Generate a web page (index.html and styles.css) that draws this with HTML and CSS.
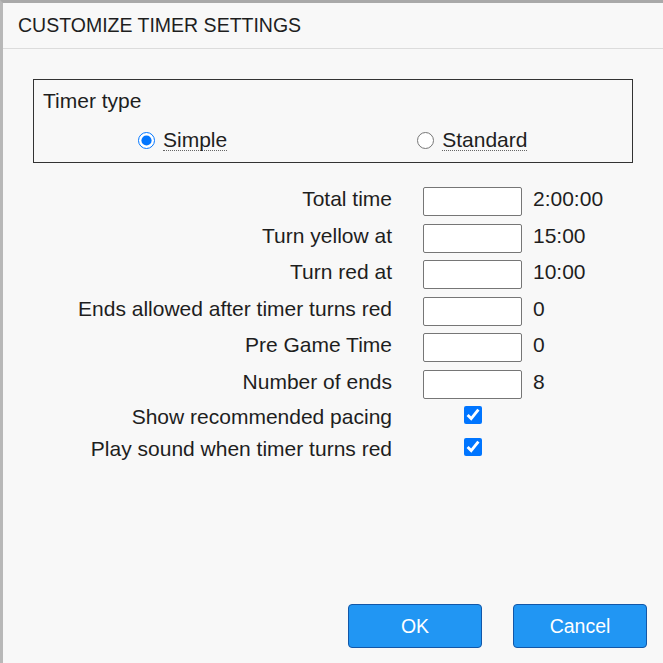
FILE: index.html
```html
<!DOCTYPE html>
<html>
<head>
<meta charset="utf-8">
<link rel="stylesheet" href="styles.css">
</head>
<body>
<div class="dialog">
  <div class="header">CUSTOMIZE TIMER SETTINGS</div>
  <div class="content">
    <div class="typebox">
      <div class="typetitle">Timer type</div>
      <div class="radios">
        <label class="opt"><input type="radio" name="tt" checked><span class="dotted">Simple</span></label>
        <label class="opt"><input type="radio" name="tt"><span class="dotted">Standard</span></label>
      </div>
    </div>
    <div class="grid">
      <div class="lbl">Total time</div><div class="fld"><input class="txt" type="text"></div><div class="val">2:00:00</div>
      <div class="lbl">Turn yellow at</div><div class="fld"><input class="txt" type="text"></div><div class="val">15:00</div>
      <div class="lbl">Turn red at</div><div class="fld"><input class="txt" type="text"></div><div class="val">10:00</div>
      <div class="lbl">Ends allowed after timer turns red</div><div class="fld"><input class="txt" type="text"></div><div class="val">0</div>
      <div class="lbl">Pre Game Time</div><div class="fld"><input class="txt" type="text"></div><div class="val">0</div>
      <div class="lbl">Number of ends</div><div class="fld"><input class="txt" type="text"></div><div class="val">8</div>
      <div class="lbl cbrow">Show recommended pacing</div><div class="fld cbrow"><input class="cb" type="checkbox" checked></div><div class="val cbrow"></div>
      <div class="lbl cbrow">Play sound when timer turns red</div><div class="fld cbrow"><input class="cb" type="checkbox" checked></div><div class="val cbrow"></div>
    </div>
  </div>
  <div class="footer">
    <button class="btn">OK</button>
    <button class="btn">Cancel</button>
  </div>
</div>
</body>
</html>
```
FILE: styles.css
```css
html, body {
  margin: 0;
  padding: 0;
  background: #f8f8f8;
}
body {
  font-family: "Liberation Sans", Arial, sans-serif;
  color: #1e1e1e;
}
.dialog {
  box-sizing: border-box;
  width: 663px;
  height: 663px;
  background: #f8f8f8;
  border-top: 3px solid #a9a9a9;
  border-left: 3px solid #b8b8b8;
  display: flex;
  flex-direction: column;
}
.header {
  height: 46px;
  box-sizing: border-box;
  padding-left: 15px;
  font-size: 19.5px;
  line-height: 44px;
  border-bottom: 1px solid #dcdcdc;
}
.content {
  flex: 1;
  display: flex;
  flex-direction: column;
}
.typebox {
  margin: 30px 30px 0 30px;
  border: 1px solid #333;
  padding: 9px 0 10px 9px;
}
.typetitle {
  font-size: 21px;
  line-height: 24px;
}
.radios {
  display: flex;
  align-items: center;
  margin-top: 15px;
  padding-left: 95px;
  gap: 190px;
  height: 24px;
}
.opt {
  display: flex;
  align-items: center;
  gap: 8px;
  font-size: 21px;
}
.opt input {
  width: 17px;
  height: 17px;
  margin: 0;
}
.dotted {
  line-height: 20px;
  border-bottom: 1px dotted #666;
}
.grid {
  display: grid;
  grid-template-columns: 420px 99px auto;
  grid-template-rows: repeat(6, 29px) 24px 24px;
  row-gap: 7.5px;
  margin-top: 24px;
  font-size: 21px;
}
.lbl {
  text-align: right;
  padding-right: 31px;
  line-height: 23px;
}
.fld {
  display: flex;
  align-items: center;
  justify-content: center;
}
.val {
  padding-left: 11px;
  line-height: 23px;
}
.txt {
  box-sizing: border-box;
  width: 99px;
  height: 29px;
  margin: 0;
  border: 1px solid #767676;
  border-radius: 2px;
  background: #fff;
}
.grid .cbrow {
  line-height: 22px;
  align-items: flex-start;
}
.cb {
  width: 18px;
  height: 18px;
  margin: 0;
}
.footer {
  display: flex;
  justify-content: flex-end;
  gap: 31px;
  padding: 0 16px 15px 0;
}
.btn {
  width: 134px;
  height: 44px;
  background: #2196f3;
  border: 1px solid #1257a8;
  border-radius: 4px;
  color: #fff;
  font-family: "Liberation Sans", Arial, sans-serif;
  font-size: 19.5px;
}
```
